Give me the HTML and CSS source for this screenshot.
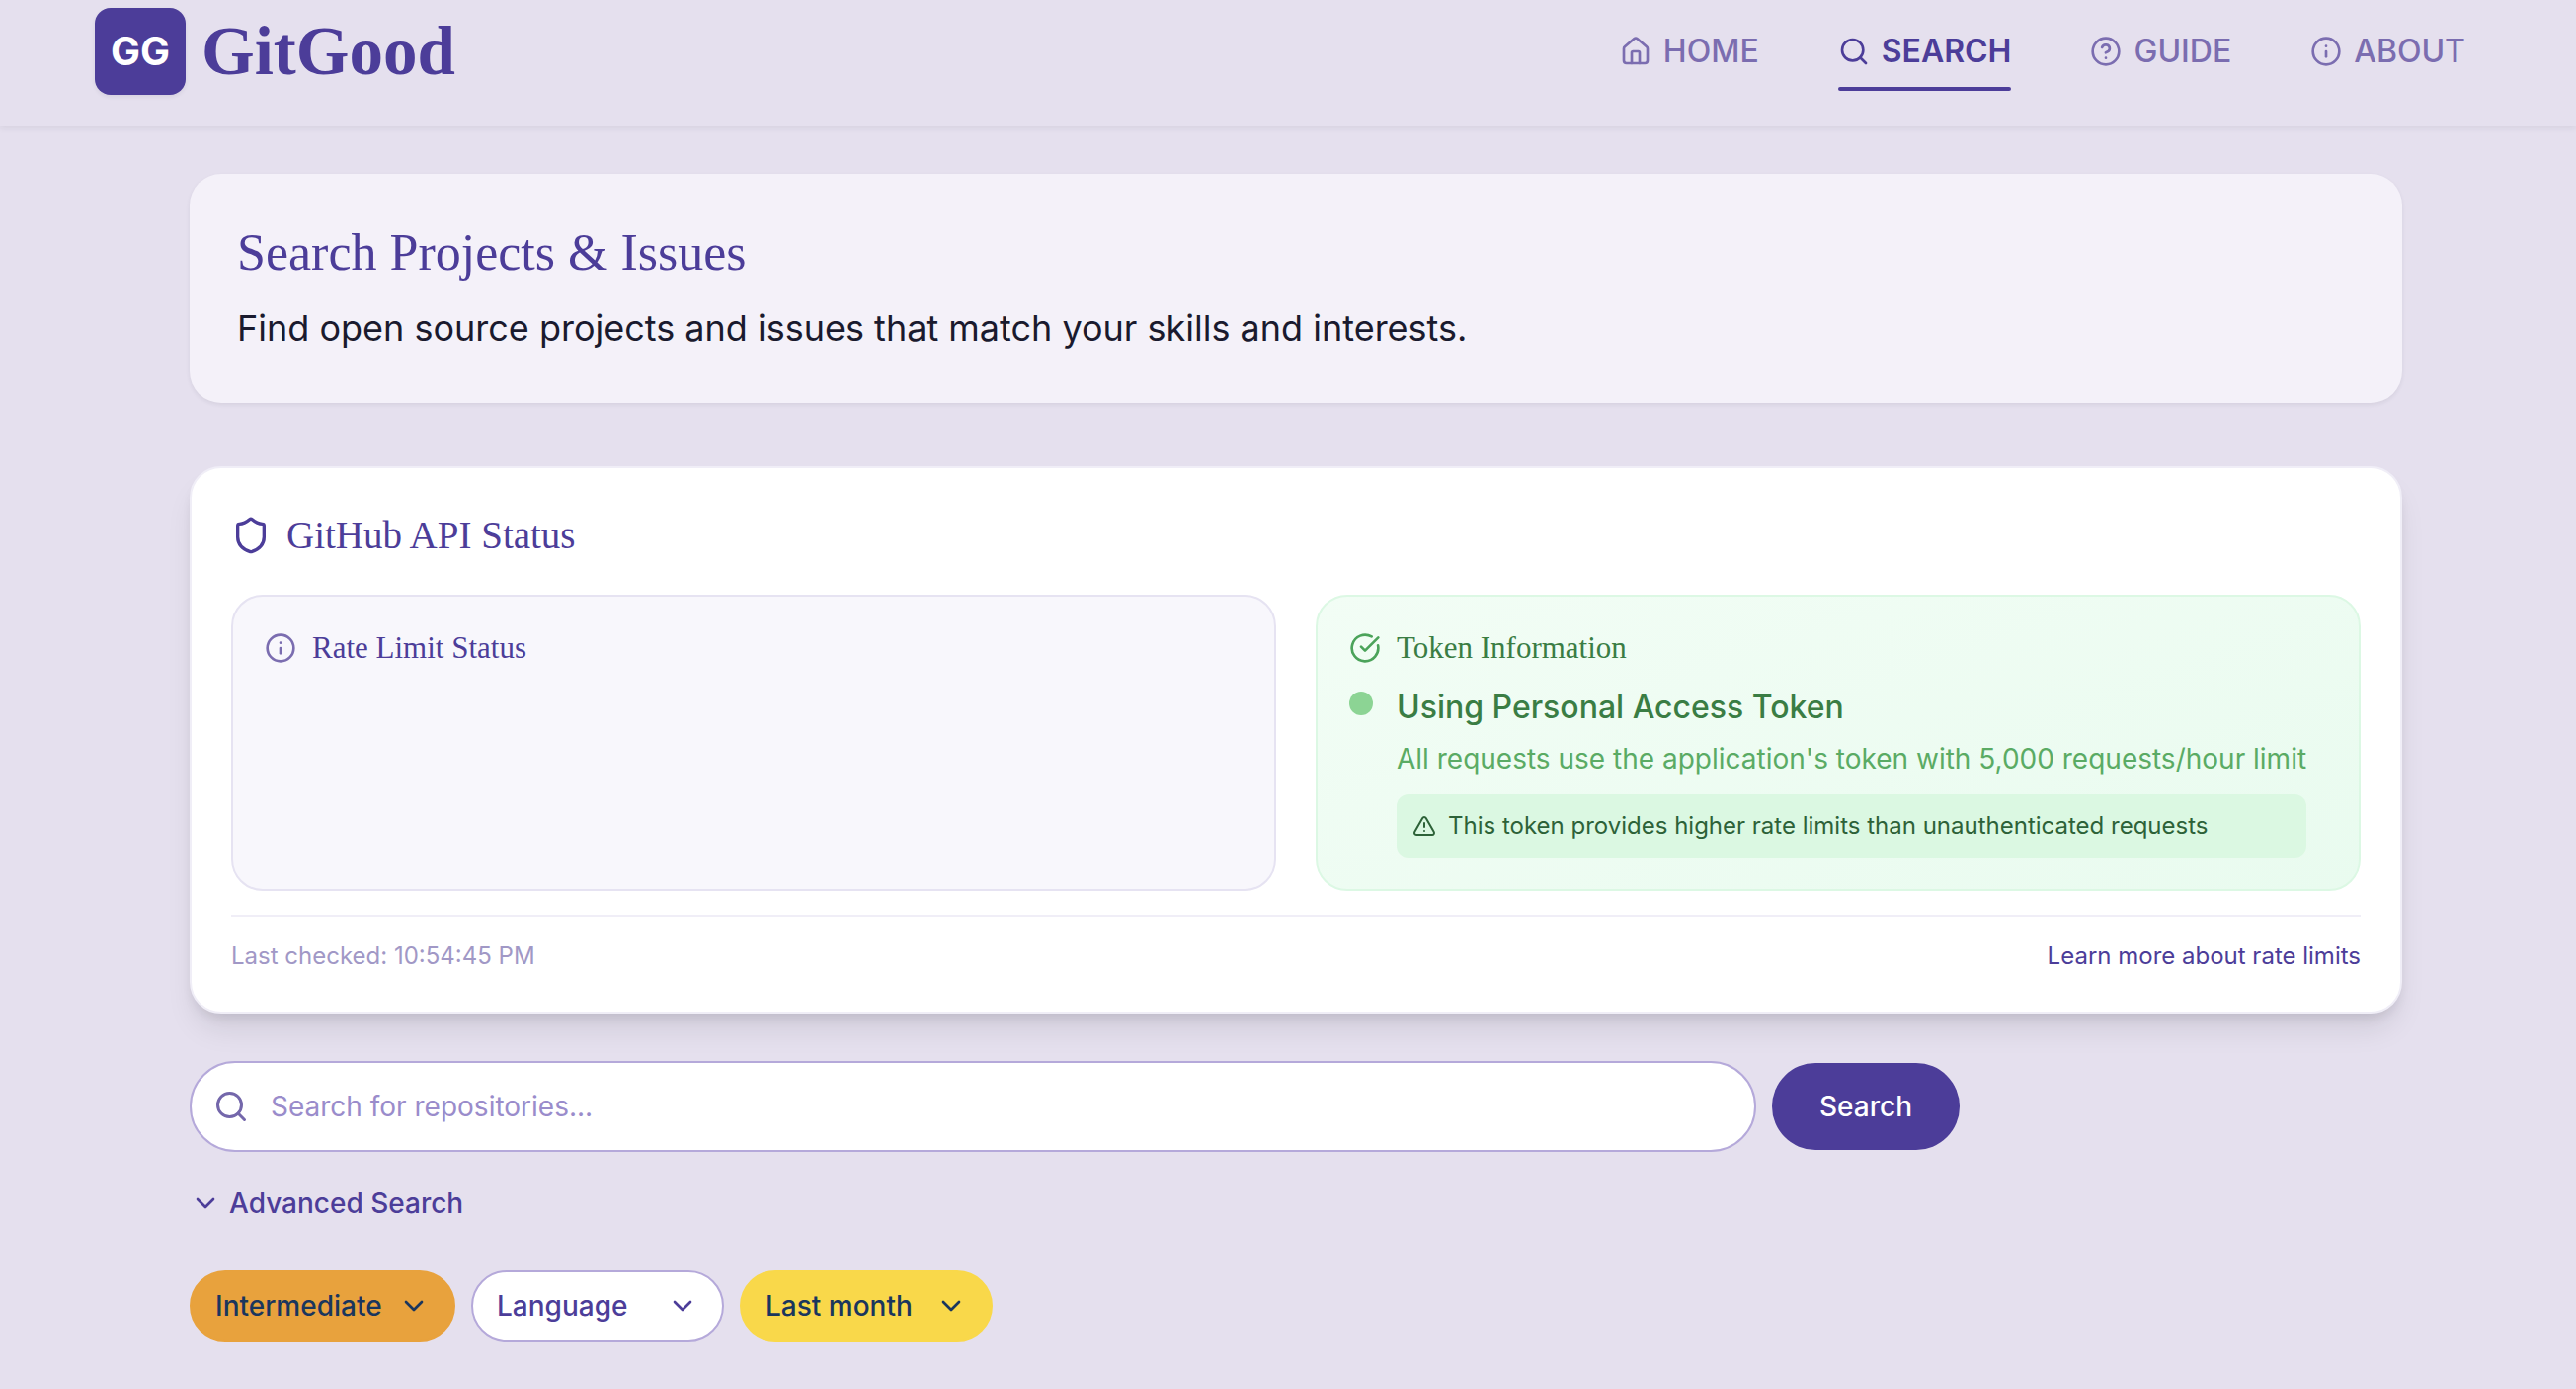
FILE: index.html
```html
<!DOCTYPE html>
<html lang="en">
<head>
  <meta charset="utf-8">
  <meta name="viewport" content="width=device-width, initial-scale=1">
  <title>GitGood - Search Projects &amp; Issues</title>
  <link rel="stylesheet" href="styles.css">
</head>
<body>
  <header class="site-header">
    <a class="brand" href="#home">
      <span class="brand-mark">GG</span>
      <span class="brand-name">GitGood</span>
    </a>
    <nav class="site-nav" aria-label="Main">
      <a class="nav-link" href="#home">
        <svg class="icon icon-md" viewBox="0 0 24 24" aria-hidden="true"><path d="M15 21v-8a1 1 0 0 0-1-1h-4a1 1 0 0 0-1 1v8"/><path d="M3 10a2 2 0 0 1 .709-1.528l7-5.999a2 2 0 0 1 2.582 0l7 5.999A2 2 0 0 1 21 10v9a2 2 0 0 1-2 2H5a2 2 0 0 1-2-2z"/></svg>
        <span>HOME</span>
      </a>
      <a class="nav-link is-active" href="#search" aria-current="page">
        <svg class="icon icon-md" viewBox="0 0 24 24" aria-hidden="true"><circle cx="11" cy="11" r="8"/><path d="m21 21-4.3-4.3"/></svg>
        <span>SEARCH</span>
      </a>
      <a class="nav-link" href="#guide">
        <svg class="icon icon-md" viewBox="0 0 24 24" aria-hidden="true"><circle cx="12" cy="12" r="10"/><path d="M9.09 9a3 3 0 0 1 5.83 1c0 2-3 3-3 3"/><path d="M12 17h.01"/></svg>
        <span>GUIDE</span>
      </a>
      <a class="nav-link" href="#about">
        <svg class="icon icon-md" viewBox="0 0 24 24" aria-hidden="true"><circle cx="12" cy="12" r="10"/><path d="M12 16v-4"/><path d="M12 8h.01"/></svg>
        <span>ABOUT</span>
      </a>
    </nav>
  </header>

  <main class="page">
    <section class="intro">
      <h1 class="intro-title">Search Projects &amp; Issues</h1>
      <p class="intro-text">Find open source projects and issues that match your skills and interests.</p>
    </section>

    <section class="status">
      <h2 class="status-title">
        <svg class="icon icon-xl" viewBox="0 0 24 24" aria-hidden="true"><path d="M20 13c0 5-3.5 7.5-7.66 8.95a1 1 0 0 1-.67-.01C7.5 20.5 4 18 4 13V6a1 1 0 0 1 1-1c2 0 4.5-1.2 6.24-2.72a1.17 1.17 0 0 1 1.52 0C14.51 3.81 17 5 19 5a1 1 0 0 1 1 1z"/></svg>
        <span>GitHub API Status</span>
      </h2>

      <div class="panels">
        <article class="panel">
          <h3 class="panel-title">
            <svg class="icon icon-md icon-muted" viewBox="0 0 24 24" aria-hidden="true"><circle cx="12" cy="12" r="10"/><path d="M12 16v-4"/><path d="M12 8h.01"/></svg>
            <span>Rate Limit Status</span>
          </h3>
        </article>

        <article class="panel panel-token">
          <h3 class="panel-title">
            <svg class="icon icon-md icon-ok" viewBox="0 0 24 24" aria-hidden="true"><path d="M21.801 10A10 10 0 1 1 17 3.335"/><path d="m9 11 3 3L22 4"/></svg>
            <span>Token Information</span>
          </h3>
          <div class="token">
            <span class="token-dot"></span>
            <div class="token-body">
              <p class="token-name">Using Personal Access Token</p>
              <p class="token-text">All requests use the application's token with 5,000 requests/hour limit</p>
              <p class="token-note">
                <svg class="icon icon-sm" viewBox="0 0 24 24" aria-hidden="true"><path d="m21.73 18-8-14a2 2 0 0 0-3.48 0l-8 14A2 2 0 0 0 4 21h16a2 2 0 0 0 1.73-3"/><path d="M12 9v4"/><path d="M12 17h.01"/></svg>
                <span>This token provides higher rate limits than unauthenticated requests</span>
              </p>
            </div>
          </div>
        </article>
      </div>

      <footer class="status-footer">
        <span>Last checked: 10:54:45 PM</span>
        <a class="status-link" href="#rate-limits">Learn more about rate limits</a>
      </footer>
    </section>

    <form class="search" action="#search">
      <label class="search-field">
        <svg class="icon icon-lg" viewBox="0 0 24 24" aria-hidden="true"><circle cx="11" cy="11" r="8"/><path d="m21 21-4.3-4.3"/></svg>
        <input class="search-input" type="text" placeholder="Search for repositories..." aria-label="Search for repositories">
      </label>
      <button class="search-button" type="submit">Search</button>
    </form>

    <button class="advanced" type="button" aria-expanded="false">
      <svg class="icon icon-md" viewBox="0 0 24 24" aria-hidden="true"><path d="m6 9 6 6 6-6"/></svg>
      <span>Advanced Search</span>
    </button>

    <div class="filters">
      <div class="filter filter-level">
        <select class="filter-select" aria-label="Difficulty">
          <option>Beginner</option>
          <option selected>Intermediate</option>
          <option>Advanced</option>
        </select>
        <svg class="icon icon-md" viewBox="0 0 24 24" aria-hidden="true"><path d="m6 9 6 6 6-6"/></svg>
      </div>
      <div class="filter">
        <select class="filter-select" aria-label="Language">
          <option selected>Language</option>
          <option>Python</option>
          <option>Rust</option>
        </select>
        <svg class="icon icon-md" viewBox="0 0 24 24" aria-hidden="true"><path d="m6 9 6 6 6-6"/></svg>
      </div>
      <div class="filter filter-date">
        <select class="filter-select" aria-label="Updated">
          <option>Last week</option>
          <option selected>Last month</option>
          <option>Last year</option>
        </select>
        <svg class="icon icon-md" viewBox="0 0 24 24" aria-hidden="true"><path d="m6 9 6 6 6-6"/></svg>
      </div>
    </div>
  </main>
</body>
</html>
```

FILE: styles.css
```css
:root {
  --purple: #4c3d99;
  --purple-mid: #7b6db0;
  --purple-line: #b5a9da;
  --page: #e5e0ee;
  --sans: Inter, "Liberation Sans", sans-serif;
  --serif: Georgia, "Liberation Serif", serif;
}

* {
  box-sizing: border-box;
}

body {
  margin: 0;
  background: var(--page);
  color: #1a1a2e;
  font-family: var(--sans);
  font-size: 28px;
  line-height: 40px;
}

h1,
h2,
h3,
p {
  margin: 0;
}

h1,
h2,
h3 {
  color: var(--purple);
  font-family: var(--serif);
  font-weight: 500;
}

a {
  color: inherit;
  text-decoration: none;
}

button,
input,
select {
  font: inherit;
}

.icon {
  flex: none;
  fill: none;
  stroke: currentColor;
  stroke-width: 2;
  stroke-linecap: round;
  stroke-linejoin: round;
}

.icon-sm {
  width: 24px;
  height: 24px;
}

.icon-md {
  width: 32px;
  height: 32px;
}

.icon-lg {
  width: 36px;
  height: 36px;
}

.icon-xl {
  width: 40px;
  height: 40px;
}

.icon-muted {
  color: var(--purple-mid);
}

.icon-ok {
  color: #4ba35a;
}

/* Header */

.site-header {
  display: flex;
  align-items: center;
  justify-content: space-between;
  padding: 8px 112px 32px 96px;
  box-shadow: 0 2px 6px rgba(40, 40, 60, 0.08);
}

.brand {
  display: flex;
  align-items: center;
  gap: 16px;
}

.brand-mark {
  display: grid;
  place-items: center;
  width: 92px;
  height: 88px;
  border-radius: 16px;
  background: var(--purple);
  box-shadow: 0 2px 4px rgba(40, 40, 60, 0.08);
  color: #fff;
  font-size: 40px;
  font-weight: 700;
}

.brand-name {
  color: var(--purple);
  font-family: var(--serif);
  font-size: 69px;
  font-weight: 700;
  line-height: 88px;
}

.site-nav {
  display: flex;
  gap: 80px;
}

.nav-link {
  position: relative;
  display: flex;
  align-items: center;
  gap: 12px;
  padding: 20px 0;
  color: var(--purple-mid);
  font-size: 32px;
  font-weight: 500;
}

.nav-link.is-active {
  color: var(--purple);
  font-weight: 600;
}

.nav-link.is-active::after {
  content: "";
  position: absolute;
  right: 0;
  bottom: 0;
  left: 0;
  height: 4px;
  border-radius: 2px;
  background: var(--purple);
}

/* Page */

.page {
  padding: 48px 176px 48px 192px;
}

.intro {
  padding: 48px;
  border-radius: 32px;
  background: #f4f1f9;
  box-shadow: 0 2px 4px rgba(40, 40, 60, 0.08);
}

.intro-title {
  font-size: 52px;
  line-height: 64px;
}

.intro-text {
  margin-top: 16px;
  font-size: 36px;
  line-height: 56px;
}

/* API status */

.status {
  margin-top: 64px;
  padding: 40px;
  border: 2px solid #f0eef7;
  border-radius: 32px;
  background: #fff;
  box-shadow: 0 20px 30px -6px rgba(20, 20, 30, 0.1), 0 8px 12px -4px rgba(20, 20, 30, 0.1);
}

.status-title {
  display: flex;
  align-items: center;
  gap: 16px;
  padding: 4px 0;
  font-size: 39px;
  line-height: 48px;
}

.panels {
  display: grid;
  grid-template-columns: 1fr 1fr;
  gap: 40px;
  margin-top: 32px;
}

.panel {
  padding: 32px;
  border: 2px solid #e6e3f2;
  border-radius: 32px;
  background: #f8f7fc;
}

.panel-title {
  display: flex;
  align-items: center;
  gap: 16px;
  font-size: 31px;
  line-height: 40px;
}

.panel-token {
  border-color: #dcf8e4;
  background: linear-gradient(160deg, #f2fdf5, #e9fbef);
}

.panel-token .panel-title {
  color: #3a7d44;
}

.token {
  display: flex;
  gap: 24px;
  margin-top: 16px;
}

.token-dot {
  flex: none;
  width: 24px;
  height: 24px;
  margin-top: 8px;
  border-radius: 50%;
  background: #8cd494;
}

.token-name {
  color: #3a7d44;
  font-size: 32px;
  font-weight: 500;
  line-height: 48px;
}

.token-text {
  margin-top: 8px;
  color: #5aab64;
}

.token-note {
  display: flex;
  align-items: center;
  gap: 12px;
  margin-top: 16px;
  padding: 16px;
  border-radius: 12px;
  background: #dbf8e2;
  color: #2d6238;
  font-size: 24px;
  line-height: 32px;
}

.status-footer {
  display: flex;
  justify-content: space-between;
  margin-top: 24px;
  padding-top: 24px;
  border-top: 2px solid #f0eef7;
  color: #a198c6;
  font-size: 24px;
  line-height: 32px;
}

.status-link {
  color: var(--purple);
}

/* Search */

.search {
  display: flex;
  align-items: center;
  gap: 16px;
  max-width: 1792px;
  margin-top: 48px;
}

.search-field {
  display: flex;
  flex: 1;
  align-items: center;
  gap: 22px;
  height: 92px;
  padding: 0 22px;
  border: 2px solid var(--purple-line);
  border-radius: 46px;
  background: #fff;
  color: #7467ab;
}

.search-input {
  flex: 1;
  min-width: 0;
  padding: 0;
  border: 0;
  outline: 0;
  background: none;
  color: var(--purple);
}

.search-input::placeholder {
  color: #9a8ccb;
  opacity: 1;
}

.search-button {
  padding: 24px 48px;
  border: 0;
  border-radius: 44px;
  background: var(--purple);
  color: #fff;
  font-weight: 500;
}

.advanced {
  display: flex;
  align-items: center;
  gap: 8px;
  margin-top: 32px;
  padding: 0;
  border: 0;
  background: none;
  color: var(--purple);
  font-weight: 500;
}

.filters {
  display: flex;
  flex-wrap: wrap;
  gap: 16px;
  margin-top: 48px;
}

/* The chevron shares the select's grid cell and sits on its right edge. */
.filter {
  display: grid;
  align-items: center;
  min-width: 256px;
  color: var(--purple);
}

.filter-select {
  grid-area: 1 / 1;
  height: 72px;
  padding: 0 72px 0 24px;
  border: 2px solid var(--purple-line);
  border-radius: 36px;
  background: #fff;
  color: inherit;
  font-weight: 500;
  appearance: none;
}

.filter .icon {
  grid-area: 1 / 1;
  justify-self: end;
  margin-right: 26px;
  pointer-events: none;
}

.filter-level,
.filter-date {
  color: #1a365d;
}

.filter-level .filter-select {
  border-color: #e8a23d;
  background: #e8a23d;
}

.filter-date .filter-select {
  border-color: #f9d84a;
  background: #f9d84a;
}
```
